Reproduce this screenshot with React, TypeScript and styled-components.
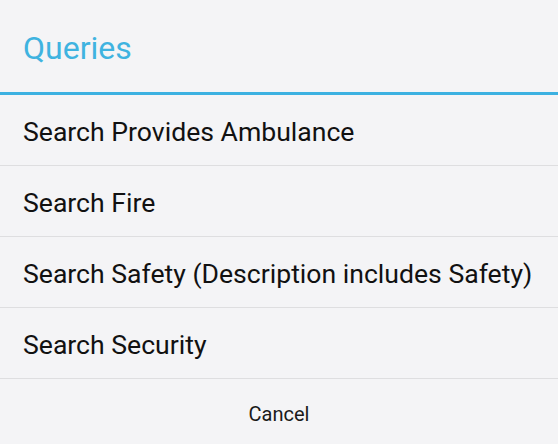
import styled, { createGlobalStyle } from 'styled-components';

const GlobalStyle = createGlobalStyle`
html, body {
    margin: 0;
    padding: 0;
    background: #f4f4f6;
    overflow: hidden;
}
`;

const Dialog = styled.div`
width: 558px;
height: 444px;
overflow: hidden;
background: #f4f4f6;
font-family: Roboto, "Liberation Sans", sans-serif;
display: flex;
flex-direction: column;
`;

const Title = styled.div`
height: 95px;
flex-shrink: 0;
box-sizing: border-box;
padding: 3px 0 0 23px;
display: flex;
align-items: center;
font-size: 32px;
color: #3fb3e0;
border-bottom: 3px solid #3cb1e1;
`;

const List = styled.div`
display: flex;
flex-direction: column;
`;

const Row = styled.div`
height: 71px;
flex-shrink: 0;
box-sizing: border-box;
padding: 2px 0 0 23px;
display: flex;
align-items: center;
font-size: 26.6px;
color: #111;
border-bottom: 1px solid #dedee0;
white-space: nowrap;
`;

const CancelButton = styled.div`
height: 70px;
flex-shrink: 0;
display: flex;
align-items: center;
justify-content: center;
font-size: 20px;
color: #1a1a1a;
`;

const queries = [
    'Search Provides Ambulance',
    'Search Fire',
    'Search Safety (Description includes Safety)',
    'Search Security',
];

const App = () => {
    return (
        <>
            <GlobalStyle />
            <Dialog>
                <Title>Queries</Title>
                <List>
                    {queries.map(q => <Row key={q}>{q}</Row>)}
                </List>
                <CancelButton>Cancel</CancelButton>
            </Dialog>
        </>
    );
}

export default App;
